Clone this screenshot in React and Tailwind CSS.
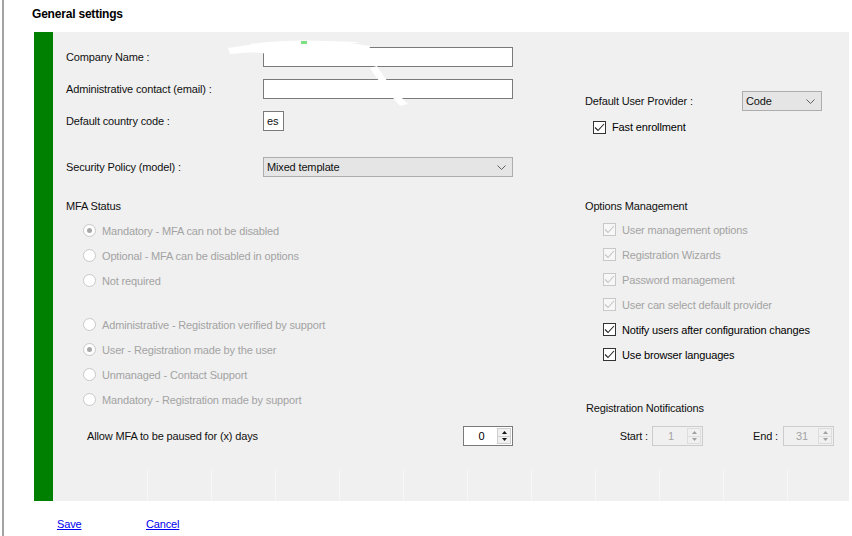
import React from "react";

function TextInput({ w, children }) {
  return (
    <div className={`h-[20px] ${w} shrink-0 border border-[#7a7a7a] bg-white flex items-center pl-[3px]`}>
      {children}
    </div>
  );
}

function Chevron() {
  return (
    <svg width="9" height="5" viewBox="0 0 9 5" className="shrink-0">
      <path d="M0.5 0.5 L4.5 4.5 L8.5 0.5" fill="none" stroke="#606060" strokeWidth="1" />
    </svg>
  );
}

function Select({ w, text }) {
  return (
    <div className={`h-[20px] ${w} shrink-0 border border-[#adadad] bg-[#e5e5e5] flex items-center justify-between pl-[3px] pr-[6px]`}>
      <span>{text}</span>
      <Chevron />
    </div>
  );
}

function Radio({ checked, label }) {
  return (
    <div className="h-[25px] flex items-center pl-[17px] text-[#a3a3a3]">
      <span className="w-[13px] h-[13px] shrink-0 rounded-full border border-[#c8c8c8] bg-white flex items-center justify-center">
        {checked && <span className="w-[5px] h-[5px] rounded-full bg-[#a8a8a8]" />}
      </span>
      <span className="ml-[6px] whitespace-nowrap">{label}</span>
    </div>
  );
}

function Check({ disabled, label, indent }) {
  return (
    <div className={`h-[25px] flex items-center ${indent} ${disabled ? "text-[#a3a3a3]" : "text-black"}`}>
      <span
        className={`w-[13px] h-[13px] shrink-0 border flex items-center justify-center ${
          disabled ? "border-[#c8c8c8] bg-[#f7f7f7]" : "border-[#333333] bg-white"
        }`}
      >
        <svg width="11" height="9" viewBox="0 0 11 9">
          <path d="M1 4.5 L4 7.5 L10 1" fill="none" stroke={disabled ? "#c4c4c4" : "#262626"} strokeWidth="1.1" />
        </svg>
      </span>
      <span className="ml-[6px] whitespace-nowrap">{label}</span>
    </div>
  );
}

function Spin({ value, disabled, w }) {
  const tri = disabled ? "#a0a0a0" : "#111111";
  return (
    <div
      className={`h-[20px] ${w} shrink-0 border flex ${
        disabled ? "border-[#cccccc] bg-[#f0f0f0] text-[#a3a3a3]" : "border-[#7a7a7a] bg-white text-black"
      }`}
    >
      <div className="flex-1 flex items-center justify-center pl-[2px]">{value}</div>
      <div className="w-[15px] flex flex-col py-[1px] pr-[1px]">
        <div className={`flex-1 flex items-center justify-center border ${disabled ? "border-[#dddddd]" : "border-[#cfcfcf] bg-[#f0f0f0]"}`}>
          <svg width="5" height="3" viewBox="0 0 5 3"><path d="M0 3 L2.5 0 L5 3 Z" fill={tri} /></svg>
        </div>
        <div className={`flex-1 flex items-center justify-center border border-t-0 ${disabled ? "border-[#dddddd]" : "border-[#cfcfcf] bg-[#f0f0f0]"}`}>
          <svg width="5" height="3" viewBox="0 0 5 3"><path d="M0 0 L5 0 L2.5 3 Z" fill={tri} /></svg>
        </div>
      </div>
    </div>
  );
}

export default function App() {
  const cells = Array.from({ length: 11 });
  return (
    <div className="relative w-[852px] h-[536px] bg-white overflow-hidden pl-[2px] font-['Liberation_Sans',Arial,sans-serif] text-[11px] tracking-[-0.15px] leading-[14px] text-[#111111]">
      <div className="h-full border-l-2 border-[#a3a3a3] flex flex-col">
        <div className="h-[32px] pl-[28px] pt-[7px] font-bold text-[12px] tracking-[-0.2px] text-black">General settings</div>

        <div className="ml-[30px] w-[815px] h-[469px] flex shrink-0 bg-[#f0f0f0]">
          <div className="w-[19px] shrink-0 bg-[#008000]" />
          <div className="flex-1 min-w-0 flex flex-col">
            <div className="flex flex-1 min-h-0">
              {/* left column */}
              <div className="w-[532px] shrink-0 pl-[13px] pt-[15px] flex flex-col">
                <div className="h-[20px] flex items-center">
                  <span className="w-[197px] shrink-0">Company Name :</span>
                  <TextInput w="w-[250px]" />
                </div>
                <div className="h-[20px] mt-[12px] flex items-center">
                  <span className="w-[197px] shrink-0">Administrative contact (email) :</span>
                  <TextInput w="w-[250px]" />
                </div>
                <div className="h-[20px] mt-[12px] flex items-center">
                  <span className="w-[197px] shrink-0">Default country code :</span>
                  <TextInput w="w-[21px]">es</TextInput>
                </div>
                <div className="h-[20px] mt-[26px] flex items-center">
                  <span className="w-[197px] shrink-0">Security Policy (model) :</span>
                  <Select w="w-[250px]" text="Mixed template" />
                </div>
                <div className="h-[16px] mt-[21px] flex items-center">MFA Status</div>
                <div className="mt-[4px] flex flex-col">
                  <Radio checked label="Mandatory - MFA can not be disabled" />
                  <Radio label="Optional - MFA can be disabled in options" />
                  <Radio label="Not required" />
                </div>
                <div className="mt-[19px] flex flex-col">
                  <Radio label="Administrative - Registration verified by support" />
                  <Radio checked label="User - Registration made by the user" />
                  <Radio label="Unmanaged - Contact Support" />
                  <Radio label="Mandatory - Registration made by support" />
                </div>
                <div className="h-[20px] mt-[14px] flex items-center pl-[21px]">
                  <span className="w-[376px] shrink-0">Allow MFA to be paused for (x) days</span>
                  <Spin value="0" w="w-[50px]" />
                </div>
              </div>

              {/* right column */}
              <div className="flex-1 min-w-0 pt-[59px] flex flex-col">
                <div className="h-[20px] flex items-center">
                  <span className="w-[157px] shrink-0">Default User Provider :</span>
                  <Select w="w-[80px]" text="Code" />
                </div>
                <div className="h-[16px] mt-[8px] flex items-center">
                  <Check label="Fast enrollment" indent="pl-[8px]" />
                </div>
                <div className="h-[16px] mt-[63px] flex items-center">Options Management</div>
                <div className="mt-[3px] flex flex-col">
                  <Check disabled label="User management options" indent="pl-[18px]" />
                  <Check disabled label="Registration Wizards" indent="pl-[18px]" />
                  <Check disabled label="Password management" indent="pl-[18px]" />
                  <Check disabled label="User can select default provider" indent="pl-[18px]" />
                  <Check label="Notify users after configuration changes" indent="pl-[18px]" />
                  <Check label="Use browser languages" indent="pl-[18px]" />
                </div>
                <div className="h-[16px] mt-[33px] flex items-center pl-[1px]">Registration Notifications</div>
                <div className="h-[20px] mt-[10px] flex items-center">
                  <span className="w-[67px] shrink-0 text-right pr-[4px]">Start :</span>
                  <Spin disabled value="1" w="w-[51px]" />
                  <span className="w-[80px] shrink-0 text-right pr-[5px]">End :</span>
                  <Spin disabled value="31" w="w-[51px]" />
                </div>
              </div>
            </div>
            <div className="h-[32px] flex pl-[94px]">
              {cells.map((_, i) => (
                <div key={i} className="w-[64px] shrink-0 border-l border-[#f7f7f7]" />
              ))}
            </div>
          </div>
        </div>

        <div className="flex pt-[16px] text-[#0000ee] underline">
          <span className="ml-[53px] w-[89px]">Save</span>
          <span>Cancel</span>
        </div>
      </div>

      {/* redaction scribbles */}
      <svg className="absolute left-[220px] top-[36px] pointer-events-none" width="300" height="75" viewBox="0 0 300 75">
        <path d="M8 12 C40 6, 90 4, 140 6 C120 10, 60 14, 10 18 Z" fill="#ffffff" />
        <path d="M30 8 C70 3, 110 3, 150 10 L148 22 C110 18, 60 20, 30 16 Z" fill="#ffffff" />
        <path d="M150 32 C158 45, 170 58, 180 70 L188 68 C176 56, 164 42, 157 30 Z" fill="#ffffff" />
        <rect x="81" y="5" width="6" height="3" fill="#7fe07f" />
      </svg>
    </div>
  );
}
